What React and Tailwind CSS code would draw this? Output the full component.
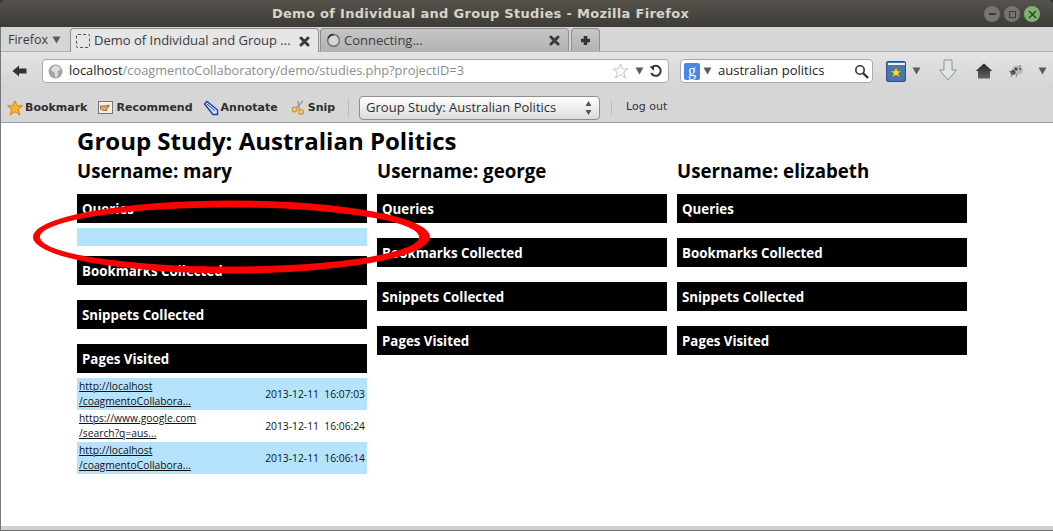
import React from 'react';

const sans = "font-['Open_Sans',sans-serif]";
const deja = "font-['DejaVu_Sans',sans-serif]";

const Caret = ({ className = '' }) => (
  <svg width="9" height="8" viewBox="0 0 9 8" className={className}>
    <path d="M0.5 0.5H8.5L4.5 7.5Z" fill="#5c5c5c" />
  </svg>
);

const Close = () => (
  <svg width="11" height="11" viewBox="0 0 11 11">
    <path d="M2 2L9 9M9 2L2 9" stroke="#3a3a3a" strokeWidth="3" strokeLinecap="round" />
  </svg>
);

const WinButton = ({ green, children }) => (
  <div className={`w-[16px] h-[16px] rounded-full flex items-center justify-center ${green ? 'bg-[#80b272]' : 'bg-[#77756f]'}`}>
    {children}
  </div>
);

const Tab = ({ active, width, icon, label }) => (
  <div
    className={`flex items-center pt-px rounded-t-[4px] border border-b-0 border-[#8f8f8f] ${
      active ? 'h-[24px] -mb-px relative bg-[#e6e6e6]' : 'h-[23px] bg-gradient-to-b from-[#c6c6c6] to-[#b3b3b3]'
    } ${width}`}
  >
    <div className="w-[18px] ml-[5px] shrink-0">{icon}</div>
    <span className={`text-[13px] text-[#3c3c3c] whitespace-nowrap flex-1 ${sans}`}>{label}</span>
    <div className="mr-[8px] flex"><Close /></div>
  </div>
);

const ToolLabel = ({ icon, label, className = '' }) => (
  <div className={`flex items-center gap-[2px] ${className}`}>
    {icon}
    <span className={`text-[11px] font-bold text-[#2e2e2e] pt-px ${deja}`}>{label}</span>
  </div>
);

const Section = ({ title, rows }) => (
  <div className="mb-[15px]">
    <div className={`h-[29px] pt-[2px] bg-black text-white text-[13.3px] font-bold pl-[5px] flex items-center ${sans}`}>{title}</div>
    {rows && (
      <div className="mt-[5px] -mb-[5px]">
        {rows.length === 0 && <div className="h-[18px] bg-[#b5e3fe]" />}
        {rows.map((row, i) => (
          <div
            key={i}
            className={`h-[32px] flex items-center justify-between px-[2px] text-[10.3px] leading-[15px] text-[#111] ${sans} ${
              i % 2 === 0 ? 'bg-[#b5e3fe]' : 'bg-white'
            }`}
          >
            <div className="underline">
              <div>{row.a}</div>
              <div>{row.b}</div>
            </div>
            <span className="whitespace-pre">{row.time}</span>
          </div>
        ))}
      </div>
    )}
  </div>
);

const User = ({ name, queries, pages }) => (
  <div className="w-[290px]">
    <h2 className={`text-[18.7px] leading-[27px] font-bold text-black mb-[10px] ${sans}`}>Username: {name}</h2>
    <Section title="Queries" rows={queries} />
    <Section title="Bookmarks Collected" />
    <Section title="Snippets Collected" />
    <Section title="Pages Visited" rows={pages} />
  </div>
);

export default function App() {
  const maryPages = [
    { a: 'http://localhost', b: '/coagmentoCollabora...', time: '2013-12-11  16:07:03' },
    { a: 'https://www.google.com', b: '/search?q=aus...', time: '2013-12-11  16:06:24' },
    { a: 'http://localhost', b: '/coagmentoCollabora...', time: '2013-12-11  16:06:14' },
  ];

  return (
    <div className="relative w-[1053px] h-[531px] overflow-hidden flex flex-col bg-[#333]">
      {/* title bar */}
      <div className="h-[27px] shrink-0 bg-gradient-to-b from-[#55534c] to-[#3c3b37] rounded-t-[5px] flex items-center relative">
        <div className={`flex-1 text-center pr-[92px] pt-px text-[13px] font-bold tracking-[0.3px] text-[#d8d4c8] ${deja}`}>
          Demo of Individual and Group Studies - Mozilla Firefox
        </div>
        <div className="absolute right-[13px] top-[6px] flex gap-[4px]">
          <WinButton><div className="w-[7px] h-[1.5px] bg-[#3c3b37]" /></WinButton>
          <WinButton><div className="w-[7px] h-[7px] border border-[#3c3b37]" /></WinButton>
          <WinButton green>
            <svg width="9" height="9" viewBox="0 0 9 9"><path d="M1 1L8 8M8 1L1 8" stroke="#2f4a2a" strokeWidth="1.5" /></svg>
          </WinButton>
        </div>
      </div>

      {/* tabs */}
      <div className="h-[25px] shrink-0 bg-[#d6d6d6] border-b border-[#b0b0b0] flex items-end pl-[1px]">
        <div className={`w-[69px] h-[23px] pt-px flex items-center pl-[7px] gap-[4px] text-[12.5px] text-[#3c3c3c] ${sans}`}>
          Firefox <Caret />
        </div>
        <Tab
          active
          width="w-[249px]"
          label="Demo of Individual and Group ..."
          icon={<div className="w-[14px] h-[14px] rounded-[2px] border border-dashed border-[#555]" />}
        />
        <div className="w-px" />
        <Tab
          width="w-[249px]"
          label="Connecting..."
          icon={<svg width="15" height="15" viewBox="0 0 14 14"><circle cx="7" cy="7" r="5.5" fill="#d5d5d5" stroke="#777" strokeWidth="1.5" /><path d="M2 5A5.5 5.5 0 0 1 7 1.5" stroke="#333" strokeWidth="1.5" fill="none" /></svg>}
        />
        <div className="w-[2px]" />
        <div className="w-[29px] h-[23px] rounded-t-[4px] border border-b-0 border-[#8f8f8f] bg-gradient-to-b from-[#c6c6c6] to-[#b3b3b3] flex items-center justify-center">
          <svg width="11" height="11" viewBox="0 0 11 11"><path d="M5.5 1V10M1 5.5H10" stroke="#333" strokeWidth="3.5" /></svg>
        </div>
      </div>

      {/* nav bar */}
      <div className="h-[38px] shrink-0 bg-gradient-to-b from-[#e4e4e4] to-[#d4d4d4] flex items-center">
        <div className="w-[38px] flex justify-center">
          <svg width="15" height="12" viewBox="0 0 15 12"><path d="M0.5 6L7 0.5V3.5H14.5V8.5H7V11.5Z" fill="#333" /></svg>
        </div>
        <div className="w-[627px] h-[24px] ml-[4px] bg-white rounded-[4px] border border-[#a9a9a9] flex items-center pl-[5px] pr-[5px]">
          <svg width="15" height="15" viewBox="0 0 14 14" className="mr-[6px] shrink-0">
            <circle cx="7" cy="7" r="6.5" fill="#a4a4a4" />
            <path d="M6 1.5L10 2L12 5L9 7L9.5 11L7 12.5L6 8L3 6L3.5 3.5Z" fill="#dcdcdc" />
          </svg>
          <span className={`flex-1 text-[12.8px] text-[#8d8d8d] ${sans}`}>
            <span className="text-[#222]">localhost</span>/coagmentoCollaboratory/demo/studies.php?projectID=3
          </span>
          <svg width="17" height="16" viewBox="0 0 17 16" className="mr-[6px]">
            <path d="M8.5 1L10.7 6H16L11.8 9.3L13.4 15L8.5 11.8L3.6 15L5.2 9.3L1 6H6.3Z" fill="#fafafa" stroke="#c8c8c8" />
          </svg>
          <Caret className="mr-[5px]" />
          <svg width="14" height="14" viewBox="0 0 14 14">
            <path d="M3 3.5A5 5 0 1 1 2.2 9" fill="none" stroke="#333" strokeWidth="2" />
            <path d="M0.5 2.5H5V7Z" fill="#333" />
          </svg>
        </div>
        <div className="w-[193px] h-[24px] ml-[11px] bg-white rounded-[4px] border border-[#a9a9a9] flex items-center pl-[3px] pr-[3px]">
          <div className="w-[16px] h-[17px] bg-[#4a86e8] rounded-[2px] text-white text-[16px] leading-[15px] text-center font-['Liberation_Serif',serif]">g</div>
          <Caret className="ml-[3px] mr-[6px]" />
          <span className={`flex-1 text-[13px] text-[#222] ${sans}`}>australian politics</span>
          <svg width="15" height="15" viewBox="0 0 15 15">
            <circle cx="6" cy="6" r="4.2" fill="none" stroke="#333" strokeWidth="1.6" />
            <path d="M9 9L14 14" stroke="#333" strokeWidth="2.4" />
          </svg>
        </div>
        <svg width="20" height="21" viewBox="0 0 20 21" className="ml-[13px]">
          <rect x="0.5" y="0.5" width="19" height="20" rx="1.5" fill="#4a76ad" stroke="#2b5080" />
          <rect x="2" y="2" width="17" height="2" fill="#eef2f6" />
          <path d="M10 6L11.7 10H15.5L12.5 12.3L13.5 16.2L10 14L6.5 16.2L7.5 12.3L4.5 10H8.3Z" fill="#f4dc3c" stroke="#8a7a10" strokeWidth="0.7" />
        </svg>
        <Caret className="ml-[6px]" />
        <svg width="20" height="24" viewBox="0 0 20 24" className="ml-[17px]">
          <path d="M6 1H14V11H18.5L10 21L1.5 11H6Z" fill="#dfe6e8" stroke="#8c9497" />
        </svg>
        <svg width="18" height="16" viewBox="0 0 18 16" className="ml-[17px]">
          <defs>
            <linearGradient id="home" x1="0" y1="0" x2="0" y2="1">
              <stop offset="0" stopColor="#222" />
              <stop offset="1" stopColor="#666" />
            </linearGradient>
          </defs>
          <path d="M9 0.5L17.5 8H15V15.5H3V8H0.5Z" fill="url(#home)" />
        </svg>
        {/* greyed out ladybird */}
        <svg width="16" height="14" viewBox="0 0 16 14" className="ml-[15px]">
          <ellipse cx="9.5" cy="6" rx="5.5" ry="4.5" fill="#b8b8b8" />
          <circle cx="8" cy="5" r="1.5" fill="#444" />
          <circle cx="12" cy="5" r="1.2" fill="#666" />
          <ellipse cx="5" cy="8.5" rx="2.5" ry="2.5" fill="#4a4a4a" />
          <path d="M1 7L5 9M2.5 13L6 9M8 13L9 10M13 1L11 3" stroke="#777" />
        </svg>
        <Caret className="ml-[14px]" />
      </div>

      {/* bookmarks toolbar */}
      <div className="h-[33px] shrink-0 pt-[3px] bg-[#d6d6d6] border-b border-[#9e9e9e] flex items-center pl-[7px]">
        <ToolLabel
          label="Bookmark"
          icon={
            <svg width="16" height="16" viewBox="0 0 17 16">
              <path d="M8.5 0.5L10.8 5.6H16.5L12 9.2L13.8 15.5L8.5 12L3.2 15.5L5 9.2L0.5 5.6H6.2Z" fill="#fbb62b" stroke="#e2761a" />
            </svg>
          }
        />
        <ToolLabel
          className="ml-[11px]"
          label="Recommend"
          icon={
            <svg width="15" height="13" viewBox="0 0 15 13" className="mr-[1px]">
              <rect x="0.5" y="0.5" width="14" height="12" fill="#f1eee4" stroke="#777" />
              <path d="M2.5 5H7L11 4V6H9V9.5H5L2.5 8Z" fill="#e7a866" stroke="#7a4a1e" strokeWidth="0.7" />
            </svg>
          }
        />
        <ToolLabel
          className="ml-[10px]"
          label="Annotate"
          icon={
            <svg width="16" height="16" viewBox="0 0 16 16">
              <path d="M1.5 4L4 1.5L14.5 10V14.5H10Z" fill="#dbe6fa" stroke="#1a3fa8" strokeWidth="1.4" />
              <path d="M4 4L12 11" stroke="#1a3fa8" />
            </svg>
          }
        />
        <ToolLabel
          className="ml-[13px]"
          label="Snip"
          icon={
            <svg width="15" height="15" viewBox="0 0 15 15">
              <circle cx="3.5" cy="9.5" r="2.2" fill="none" stroke="#e29a1f" strokeWidth="1.6" />
              <circle cx="10" cy="12" r="2.2" fill="none" stroke="#e29a1f" strokeWidth="1.6" />
              <path d="M5 8L12 1M8.5 10L7 1" stroke="#9a9a9a" strokeWidth="1.5" />
            </svg>
          }
        />
        <div className="ml-[13px] w-px h-[18px] bg-[#bcbcbc]" />
        <div className={`ml-[10px] w-[241px] h-[24px] rounded-[4px] border border-[#8e8e8e] bg-gradient-to-b from-white to-[#dcdcdc] flex items-center justify-between pl-[6px] pr-[7px] text-[13px] text-[#2e2e2e] ${sans}`}>
          Group Study: Australian Politics
          <svg width="7" height="18" viewBox="0 0 7 18">
            <path d="M3.5 2L6.5 7H0.5ZM3.5 16L0.5 11H6.5Z" fill="#555" />
          </svg>
        </div>
        <div className="ml-[11px] w-px h-[16px] bg-[#bcbcbc]" />
        <span className={`ml-[14px] text-[11px] text-[#333] ${deja}`}>Log out</span>
      </div>

      {/* page */}
      <div className="flex-1 pl-[77px] bg-white">
        <h1 className={`text-[24px] leading-[32px] font-bold text-black pt-[2px] h-[34px] ${sans}`}>Group Study: Australian Politics</h1>
        <div className="flex gap-[10px]">
          <User name="mary" queries={[]} pages={maryPages} />
          <User name="george" />
          <User name="elizabeth" />
        </div>
      </div>

      {/* status bar */}
      <div className="h-[5px] shrink-0 bg-[#d0d0d0] border-b border-[#707070]" />

      {/* window edge */}
      <div className="absolute left-0 top-[27px] bottom-0 w-px bg-[#777]" />

      {/* hand drawn red ring over the first user's queries */}
      <svg width="1053" height="531" viewBox="0 0 1053 531" className="absolute left-0 top-0 pointer-events-none">
        <path
          fillRule="evenodd"
          fill="#ff0000"
          d="M33 237A198.5 36.5 0 1 1 430 237A198.5 36.5 0 1 1 33 237ZM40 238A189.5 29.5 0 1 0 419 236A189.5 29.5 0 1 0 40 238Z"
        />
      </svg>
    </div>
  );
}
